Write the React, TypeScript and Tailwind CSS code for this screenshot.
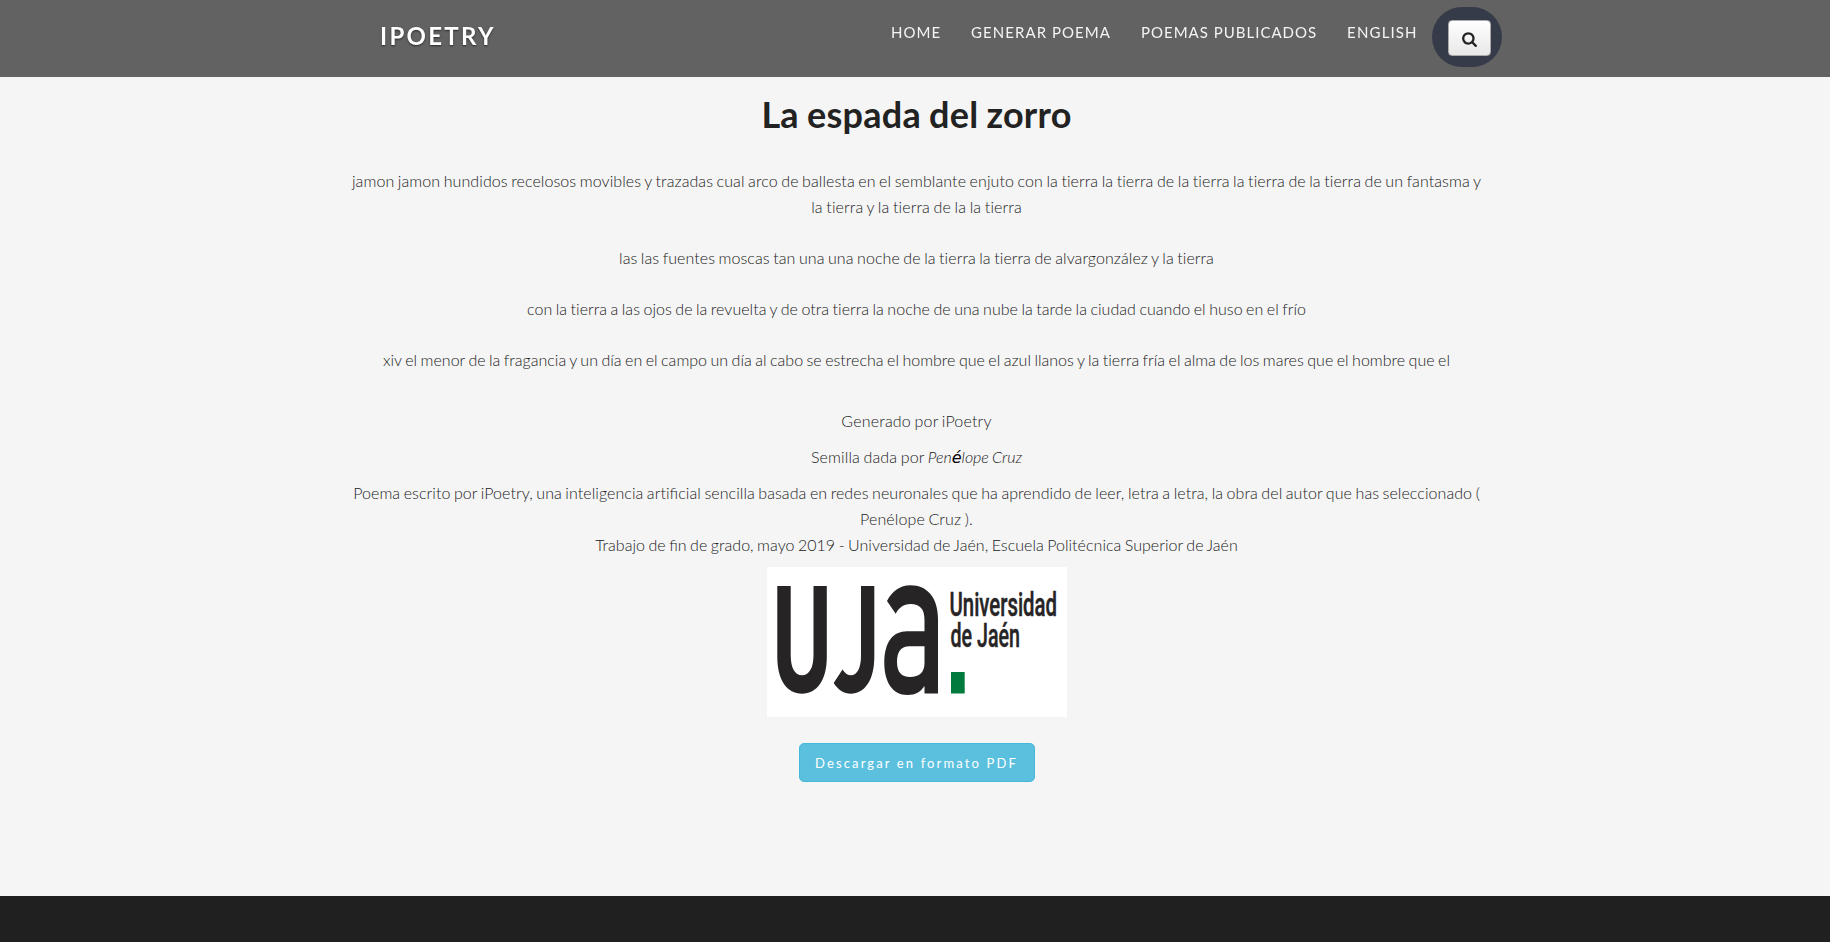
import React from "react";

function SearchIcon() {
  return (
    <svg className="mt-px" width="15" height="16" viewBox="0 0 1664 1792" fill="#222">
      <path d="M1152 832q0-185-131.500-316.500t-316.500-131.500-316.500 131.500-131.500 316.500 131.500 316.500 316.500 131.500 316.500-131.500 131.500-316.500zm512 832q0 52-38 90t-90 38q-54 0-90-38l-343-342q-179 124-399 124-143 0-273.500-55.500t-225-150-150-225-55.500-273.500 55.500-273.500 150-225 225-150 273.500-55.500 273.500 55.500 225 150 150 225 55.500 273.500q0 220-124 399l343 343q37 37 37 90z" />
    </svg>
  );
}

function Header() {
  return (
    <header className="h-[77px] bg-[#626262] will-change-transform">
      <div className="flex h-full items-start pl-[380px]">
        <a className="mt-[18px] w-[511px] text-[24px] leading-[36px] font-bold tracking-[2.3px] text-white [text-shadow:0_1px_2px_rgba(0,0,0,0.6)]">
          IPOETRY
        </a>
        <nav className="mt-[20px] flex gap-[30px] text-[15px] leading-[24px] tracking-[1px] whitespace-nowrap text-[#f4f4f4]">
          <a>HOME</a>
          <a className="tracking-[1.05px]">GENERAR POEMA</a>
          <a>POEMAS PUBLICADOS</a>
          <a className="tracking-[1.15px]">ENGLISH</a>
        </nav>
        <div className="mt-[7px] ml-[14px] h-[60px] w-[70px] rounded-[30px] bg-[#363b49] pt-[13px] pl-4">
          <button
            aria-label="Buscar"
            className="flex h-[36px] w-[43px] items-center justify-center rounded-[4px] border border-[#aaa] bg-linear-to-b from-white to-[#e9e8e8]"
          >
            <SearchIcon />
          </button>
        </div>
      </div>
    </header>
  );
}

function Fi() {
  return <span className="tracking-normal [font-variant-ligatures:normal]">fi</span>;
}

function UniversityLogo() {
  return (
    <svg className="mx-auto mt-[9px] block bg-white" width="300" height="150" viewBox="0 0 300 150">
      <g fill="#272425">
        <path d="M10.300 19H23.700V88C23.700 101 28 108.300 35 108.300C42 108.300 46.500 101 46.500 88V19H59.800V90C59.800 113 50 126.700 35 126.700C20 126.700 10.300 113 10.300 90Z" />
        <path d="M94 19H107.300V90C107.300 114 97 126.700 84 126.700C77 126.700 71 123 66.700 116L75.500 102.500C78 106.500 81 108.300 84 108.300C90 108.300 94 101 94 89Z" />
        <path
          fillRule="evenodd"
          d="M120 34C125 24.500 133 18.300 143.500 18.300C160.500 18.300 171 31 171 52V126.500H157.500V119C153.500 125 148.500 128 140.500 128C125.500 128 117.300 115 117.300 96C117.300 75 126 64.300 140 64.300H157.500V53C157.500 42 153 37 143.500 37C136.500 37 131.500 41 128.700 46.700ZM157.500 79.300H142.500C134 79.300 130 85 130 95C130 105 134.500 110 143 110C152.500 110 157.500 105 157.500 96Z"
        />
      </g>
      <rect x="184" y="105" width="13.700" height="21.500" fill="#007a3d" />
      <g fill="#272425" stroke="#272425" strokeWidth=".5" fontFamily="Roboto, sans-serif" fontSize="33" fontWeight="500" wordSpacing="0">
        <text x="182.500" y="49.300" textLength="107.500" lengthAdjust="spacingAndGlyphs">Universidad</text>
        <text x="183.500" y="80" textLength="69.500" lengthAdjust="spacingAndGlyphs">de Jaén</text>
      </g>
    </svg>
  );
}

export default function App() {
  return (
    <div className="flex min-h-[942px] flex-col bg-[#f5f5f5] font-['Lato','Open_Sans',sans-serif] text-[#222]">
      <Header />
      <main className="mx-auto h-[819px] w-[1144px] pl-[3px] text-center text-[16px] leading-[25.6px] font-light whitespace-nowrap [font-variant-ligatures:none] [word-spacing:-0.9px]">
        <h1 className="mt-[17px] text-[36px] leading-[40px] font-bold tracking-[0.25px]">La espada del zorro</h1>
        <p className="mt-[34.200px]">
          <span className="block tracking-[0.084px]">
            jamon jamon hundidos recelosos movibles y trazadas cual arco de ballesta en el semblante enjuto con la tierra la tierra de la tierra la tierra de la tierra de un fantasma y
          </span>
          <span className="block tracking-[0.13px]">la tierra y la tierra de la la tierra</span>
        </p>
        <p className="mt-[25.6px] tracking-[0.07px]">
          las las fuentes moscas tan una una noche de la tierra la tierra de alvargonzález y la tierra
        </p>
        <p className="mt-[25.6px] tracking-[0.037px]">
          con la tierra a las ojos de la revuelta y de otra tierra la noche de una nube la tarde la ciudad cuando el huso en el frío
        </p>
        <p className="mt-[25.6px] tracking-[0.015px]">
          xiv el menor de la fragancia y un día en el campo un día al cabo se estrecha el hombre que el azul llanos y la tierra fría el alma de los mares que el hombre que el
        </p>
        <p className="mt-[35px] tracking-[0.18px]">Generado por iPoetry</p>
        <p className="mt-[10.400px] h-[25.6px] tracking-[0.13px]">
          Semilla dada por{" "}
          <em className="tracking-normal">
            Pen<span className="font-['DejaVu_Sans'] leading-none font-normal text-black">é</span>lope Cruz
          </em>
        </p>
        <p className="mt-[10px] leading-[26px] tracking-[0.068px]">
          <span className="block">
            Poema escrito por iPoetry, una inteligencia arti
            <Fi />cial sencilla basada en redes neuronales que ha aprendido de leer, letra a letra, la obra del autor que has seleccionado (
          </span>
          <span className="block tracking-[0.12px]">Penélope Cruz ).</span>
        </p>
        <p className="leading-[26px] tracking-[0.03px]">
          Trabajo de <Fi />n de grado, mayo 2019 - Universidad de Jaén, Escuela Politécnica Superior de Jaén
        </p>
        <UniversityLogo />
        <button className="mt-[26px] h-[39px] w-[236px] rounded-[5px] border border-[#46b8da] bg-[#5bc0de] pt-[3px] text-[13px] font-normal tracking-[2.12px] text-white [word-spacing:0px]">
          Descargar en formato PDF
        </button>
      </main>
      <footer className="h-[46px] bg-[#202020]" />
    </div>
  );
}
